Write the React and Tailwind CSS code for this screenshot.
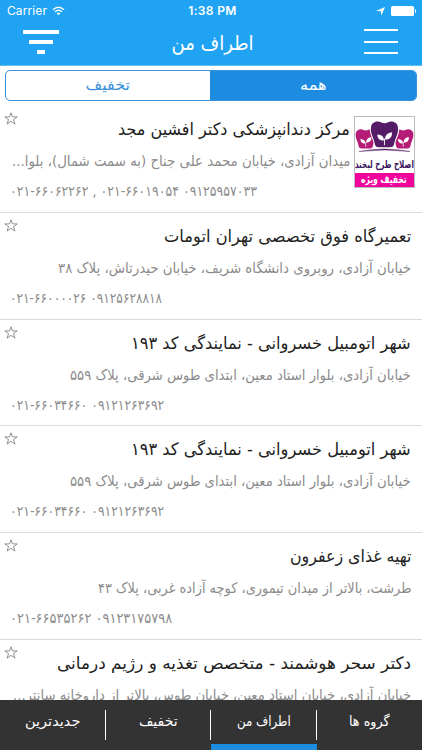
import { useLayoutEffect, useRef, useState } from "react";

// Scales a single line horizontally so that it fills the given width.
function Fit({ width, origin = "right", className = "", children }) {
  const ref = useRef(null);
  const [scale, setScale] = useState(1);
  useLayoutEffect(() => {
    setScale(width / ref.current.offsetWidth);
  }, [width, children]);
  return (
    <span
      ref={ref}
      className={"inline-block shrink-0 whitespace-nowrap " + className}
      style={{ transform: `scaleX(${scale})`, transformOrigin: origin }}
    >
      {children}
    </span>
  );
}

const khosravani = {
  title: "شهر اتومبیل خسروانی - نمایندگی کد ۱۹۳",
  titleWidth: 280,
  address: "خیابان آزادی، بلوار استاد معین، ابتدای طوس شرقی، پلاک ۵۵۹",
  addressWidth: 341,
  phone: "۰۲۱-۶۶۰۳۴۶۶۰ ۰۹۱۲۱۲۶۳۶۹۲",
  phoneWidth: 154,
};

const places = [
  {
    title: "مرکز دندانپزشکی دکتر افشین مجد",
    titleWidth: 232,
    address: "میدان آزادی، خیابان محمد علی جناح (به سمت شمال)، بلوا...",
    addressWidth: 338,
    phone: "۰۲۱-۶۶۰۶۲۲۶۲ , ۰۲۱-۶۶۰۱۹۰۵۴ ۰۹۱۲۵۹۵۷۰۳۳",
    phoneWidth: 247,
    logo: true,
  },
  {
    title: "تعمیرگاه فوق تخصصی تهران اتومات",
    titleWidth: 247,
    address: "خیابان آزادی، روبروی دانشگاه شریف، خیابان حیدرتاش، پلاک ۳۸",
    addressWidth: 353,
    phone: "۰۲۱-۶۶۰۰۰۰۲۶ ۰۹۱۲۵۶۲۸۸۱۸",
    phoneWidth: 152,
  },
  khosravani,
  khosravani,
  {
    title: "تهیه غذای زعفرون",
    titleWidth: 122,
    address: "طرشت، بالاتر از میدان تیموری، کوچه آزاده غربی، پلاک ۴۳",
    addressWidth: 314,
    phone: "۰۲۱-۶۶۵۳۵۲۶۲ ۰۹۱۲۳۱۷۵۷۹۸",
    phoneWidth: 162,
  },
  {
    title: "دکتر سحر هوشمند - متخصص تغذیه و رژیم درمانی",
    titleWidth: 354,
    address: "خیابان آزادی، خیابان استاد معین، خیابان طوس، بالاتر از داروخانه سانتر...",
    addressWidth: 398,
    phone: "",
    phoneWidth: 0,
  },
];

function Star() {
  return (
    <svg className="absolute left-1 top-[6px]" width="14" height="13" viewBox="0 0 14 13" fill="none" stroke="#666" strokeWidth="0.7">
      <path d="M7 .8 8.5 4.9H13.2L9.5 7.6 10.9 12.1 7 9.3 3.1 12.1 4.5 7.6.8 4.9H5.5Z" />
    </svg>
  );
}

function Tooth({ x, y, s, color }) {
  return (
    <g transform={`translate(${x} ${y}) scale(${s})`}>
      <path fill={color} d="M.5 5C1 1 7-1 10 1Q13.5 3 17 1C20-1 26 1 26.5 5C28 12 24 16 23 22Q22.5 25.5 19 25.5H8Q4.5 25.5 4 22C3 16-1 12 .5 5Z" />
      <path d="M13.5 23.5V17" stroke="#fff" strokeWidth="0.9" />
      <path fill="#fff" d="M13 19C8 19 6.5 16 6.5 13 11 13.5 13 15 13 19ZM14 18C14 13.5 17 11 21 11 21 15.500 19 18 14 18Z" />
    </g>
  );
}

function ClinicLogo() {
  return (
    <div className="mr-[7px] mt-[10px] flex h-[72px] w-[61px] shrink-0 flex-col overflow-hidden border border-[#bbb] bg-white">
      <svg className="block shrink-0" width="59" height="39" viewBox="0 0 59 39">
        <Tooth x={0.5} y={12} s={0.76} color="#b51c78" />
        <Tooth x={38} y={12} s={0.76} color="#b51c78" />
        <Tooth x={14.7} y={3.5} s={1.1} color="#fff" />
        <Tooth x={15.7} y={4.2} s={1.02} color="#541b66" />
        <path d="M4 34.500Q29 29.500 55 34.500Q29 31.500 4 34.500Z" fill="#541b66" stroke="#541b66" strokeWidth=".4" />
      </svg>
      <div dir="rtl" className="h-[17px] shrink-0 text-[11px] font-bold leading-[18px] text-[#3d1760]">
        <Fit width={59}>اصلاح طرح لبخند</Fit>
      </div>
      <div dir="rtl" className="-mx-px flex h-[15px] shrink-0 bg-[#f0049b] pr-[8px] text-[11px] font-bold leading-[13px] text-white">
        <Fit width={46}>تخفیف ویژه</Fit>
      </div>
    </div>
  );
}

function PlaceRow({ place }) {
  return (
    <article className="relative h-[106.8px] shrink-0 border-b border-[#dadada] bg-white">
      <Star />
      <div dir="rtl" className="flex">
        {place.logo && <ClinicLogo />}
        <div className={place.logo ? "pr-[4px]" : "pr-[11px]"}>
          <h2 className="flex h-[43px] pt-[9px] text-[17px] leading-[28px] text-[#222]">
            <Fit width={place.titleWidth}>{place.title}</Fit>
          </h2>
          <p className="flex h-[30px] text-[14.5px] leading-[25px] text-[#8b8b8b]">
            <Fit width={place.addressWidth}>{place.address}</Fit>
          </p>
        </div>
      </div>
      {place.phone && (
        <div className="absolute left-[10px] top-[74px] flex text-[14.5px] leading-[23px] text-[#8b8b8b]">
          <Fit width={place.phoneWidth} origin="left" className="[direction:ltr] [unicode-bidi:bidi-override]">
            {place.phone}
          </Fit>
        </div>
      )}
    </article>
  );
}

function StatusBar() {
  return (
    <div className="flex h-[22px] items-center px-[7px] font-['Inter'] text-[12px] text-white">
      <div className="flex flex-1 items-center gap-[5px]">
        <span className="tracking-[0.1px]">Carrier</span>
        <svg width="13" height="10" viewBox="0 0 14 10" fill="none" stroke="#fff" strokeWidth="1.5">
          <path d="M1 3.6Q7-1.8 13 3.6M3.2 5.8Q7 2.4 10.8 5.8" />
          <path d="M4.9 7.4Q7 5.7 9.1 7.4L7 9.6Z" fill="#fff" stroke="none" />
        </svg>
      </div>
      <span className="ml-[3px] font-semibold tracking-[0.35px]">1:38 PM</span>
      <div className="flex flex-1 items-center justify-end gap-[6px]">
        <svg width="9" height="9" viewBox="0 0 9 9" fill="#fff">
          <path d="M9 0 5.4 8.6 4.9 4.3 0 3.9Z" />
        </svg>
        <div className="-mr-[1px] flex items-center gap-px">
          <span className="h-[10px] w-[23px] rounded-[1.5px] bg-white" />
          <span className="h-[4px] w-[1.5px] rounded-r bg-white" />
        </div>
      </div>
    </div>
  );
}

const tabs = [
  { label: "جدیدترین", width: 55 },
  { label: "تخفیف", width: 39 },
  { label: "اطراف من", width: 54, active: true },
  { label: "گروه ها", width: 41 },
];

export default function App() {
  return (
    <div className="flex h-[750px] w-[422px] flex-col overflow-hidden bg-white font-['DejaVu_Sans',sans-serif]">
      <header className="h-[66px] shrink-0 border-b border-[#62bdf3] bg-[#1fa3f2]">
        <StatusBar />
        <div className="flex h-[43px] items-start justify-between pl-[23px] pr-[24px]">
          <div className="mt-[8px] flex w-[36px] flex-col items-center gap-[6px]">
            <span className="h-[4px] w-[36px] bg-white" />
            <span className="h-[4px] w-[24px] bg-white" />
            <span className="h-[4px] w-[8px] bg-white" />
          </div>
          <h1 dir="rtl" className="ml-[2px] flex w-[82px] justify-center text-[20px] leading-[42px] text-white">
            <Fit width={82} origin="center">اطراف من</Fit>
          </h1>
          <div className="mt-[7px] flex flex-col gap-[9.5px]">
            <span className="h-[2px] w-[34px] bg-white" />
            <span className="h-[2px] w-[34px] bg-white" />
            <span className="h-[2px] w-[34px] bg-white" />
          </div>
        </div>
      </header>

      <div className="h-[40px] shrink-0 px-[5px] pt-[4px]">
        <div className="flex h-[31px] overflow-hidden rounded-[5px] border border-[#3b91dc] text-[15px] leading-[29px]">
          <div className="flex w-[204px] justify-center text-[#3b91dc]">
            <Fit width={45} origin="center">تخفیف</Fit>
          </div>
          <div className="flex flex-1 justify-center bg-[#1c8be0] text-white">
            <Fit width={27} origin="center">همه</Fit>
          </div>
        </div>
      </div>

      <main className="flex min-h-0 flex-1 flex-col overflow-hidden">
        {places.map((place, i) => (
          <PlaceRow key={i} place={place} />
        ))}
      </main>

      <nav className="flex h-[50px] shrink-0 bg-[#333] text-[14px] leading-[43px] text-white">
        {tabs.map((tab, i) => (
          <div key={tab.label} className="relative flex flex-1 justify-center">
            <Fit width={tab.width} origin="center">{tab.label}</Fit>
            {i < 3 && <span className="absolute right-0 top-[10px] h-[30px] w-px bg-white" />}
            {tab.active && <span className="absolute inset-x-0 bottom-0 h-[6px] bg-[#1c8be0]" />}
          </div>
        ))}
      </nav>
    </div>
  );
}
